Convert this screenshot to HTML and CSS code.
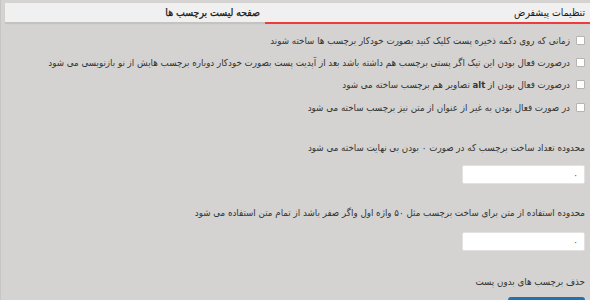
FILE: index.html
```html
<!DOCTYPE html>
<html lang="fa" dir="rtl">
<head>
<meta charset="utf-8">
<link rel="stylesheet" href="styles.css">
</head>
<body>
<div class="page">
  <div class="tabs">
    <div class="tab active">تنظیمات پیشفرض</div>
    <div class="tab">صفحه لیست برچسب ها</div>
  </div>
  <div class="content">
    <label class="check"><span class="box"></span><span>زمانی که روی دکمه ذخیره پست کلیک کنید بصورت خودکار برچسب ها ساخته شوند</span></label>
    <label class="check"><span class="box"></span><span>درصورت فعال بودن این تیک اگر پستی برچسب هم داشته باشد بعد از آپدیت پست بصورت خودکار دوباره برچسب هایش از نو بازنویسی می شود</span></label>
    <label class="check"><span class="box"></span><span>درصورت فعال بودن از <b class="latin">alt</b> تصاویر هم برچسب ساخته می شود</span></label>
    <label class="check"><span class="box"></span><span>در صورت فعال بودن به غیر از عنوان از متن نیز برچسب ساخته می شود</span></label>

    <div class="field f1">
      <div class="label">محدوده تعداد ساخت برچسب که در صورت ۰ بودن بی نهایت ساخته می شود</div>
      <div class="input">۰</div>
    </div>
    <div class="field f2">
      <div class="label">محدوده استفاده از متن برای ساخت برچسب مثل ۵۰ واژه اول واگر صفر باشد از تمام متن استفاده می شود</div>
      <div class="input">۰</div>
    </div>
    <div class="field f3">
      <div class="label">حذف برچسب های بدون پست</div>
      <div class="button"></div>
    </div>
  </div>
</div>
</body>
</html>
```
FILE: styles.css
```css
html, body {
  margin: 0;
  padding: 0;
}
body {
  background: #d4d3d1;
  font-family: "DejaVu Sans Condensed", "DejaVu Sans", sans-serif;
  font-size: 9.7px;
  color: #333;
  width: 590px;
  height: 300px;
  overflow: hidden;
}
.page {
  height: 300px;
  overflow: hidden;
  border-left: 1px solid #c6c5c3;
  padding-top: 3px;
  box-sizing: border-box;
}
.tabs {
  display: flex;
  margin-left: 4px;
  background: #f0f0f0;
  height: 19px;
  box-shadow: 0 2px 1px #c4c3c1;
}
.tab {
  font-size: 10.4px;
  color: #1a1a1a;
  line-height: 19px;
  padding-right: 5px;
  box-sizing: border-box;
}
.tab.active {
  width: 325px;
  border-bottom: 2px solid #ee3b3b;
  height: 21px;
}
.tab:not(.active) {
  width: 260px;
  -webkit-text-stroke: 0.25px #1a1a1a;
}
.content {
  padding: 7px 5px 0 6px;
}
.check {
  display: flex;
  align-items: center;
  gap: 6px;
  height: 22.4px;
  white-space: nowrap;
}
.latin {
  font-family: "DejaVu Sans", sans-serif;
  font-size: 8.5px;
  font-weight: bold;
}
.box {
  width: 7px;
  height: 7px;
  border: 1px solid #b4b4b4;
  background: #fff;
  border-radius: 1px;
  flex: none;
}
.label {
  line-height: 14px;
}
.f1 {
  margin-top: 22px;
}
.f2 {
  margin-top: 22px;
}
.f3 {
  margin-top: 24px;
}
.input {
  margin-top: 10px;
  width: 123px;
  height: 19px;
  box-sizing: border-box;
  background: #fff;
  border: 1px solid #e2e2e2;
  border-radius: 2px;
  line-height: 17px;
  padding-right: 6px;
  color: #555;
}
.f2 .input {
  margin-top: 12px;
}
.button {
  margin-top: 8px;
  width: 77px;
  height: 3px;
  background: #2271b1;
  border-radius: 3px 3px 0 0;
}
```
